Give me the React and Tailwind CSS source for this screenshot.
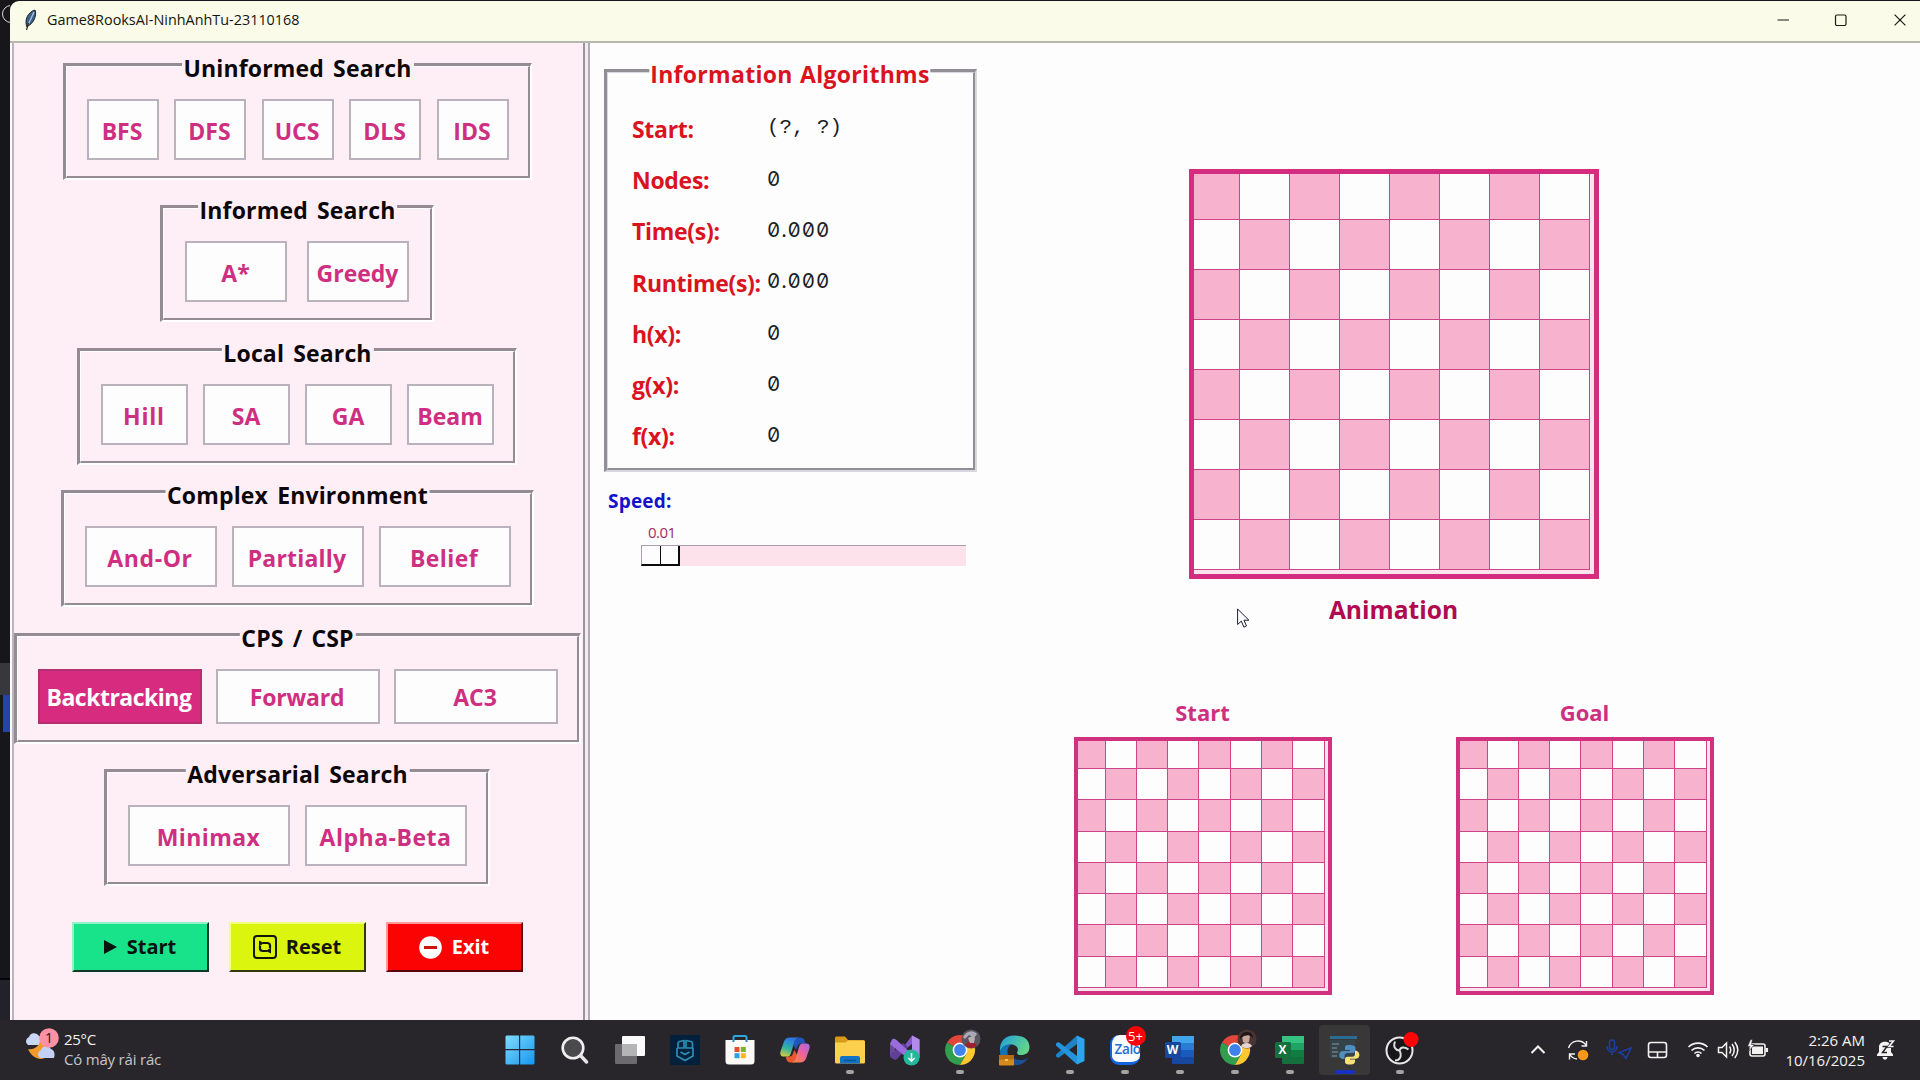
import React from 'react';

const PINK = 'text-[#cf2f80]';

const TRACKING = {
  'Alpha-Beta': 'tracking-[0.5px]',
  'And-Or': 'tracking-[0.6px]',
  Minimax: 'tracking-[0.4px]',
  Hill: 'tracking-[0.8px]',
  Belief: 'tracking-[0.4px]',
  Partially: 'tracking-[0.2px]',
  Backtracking: 'tracking-[-0.5px]',
  Forward: 'tracking-[-0.2px]',
};

function Group({ title, items, frame, button, selected, inset = 'pr-[19px] pl-[20px]' }) {
  return (
    <section className={`relative shrink-0 border-t-[3px] border-r-2 border-b-2 border-l-[3px] border-t-[#948c92] border-l-[#948c92] border-r-white border-b-white ${frame}`}>
      <div className={`flex h-full items-end justify-between border-t border-r-2 border-b-2 border-l border-t-white border-l-white border-r-[#948c92] border-b-[#948c92] pb-[16px] ${inset}`}>
        {items.map((t) => (
          <button
            key={t}
            className={`flex items-center justify-center border-2 pr-[1px] text-[23px] leading-none font-bold whitespace-nowrap ${TRACKING[t] || ''} ${button} ${
              t === selected ? 'border-[#b5306f] bg-[#d62b7f] text-white' : `border-[#b9b1bb] bg-[#fdfdfe] ${PINK}`
            }`}
          >
            {t}
          </button>
        ))}
      </div>
      <h2 className="absolute -top-[13px] left-1/2 -translate-x-1/2 bg-[#feeef5] px-[2px] text-[23px] leading-[30px] font-bold tracking-[0.150px] whitespace-nowrap text-[#0c070a] [word-spacing:3px]">
        {title}
      </h2>
    </section>
  );
}

function Board({ large }) {
  const cells = [];
  for (let r = 0; r < 8; r++) {
    for (let c = 0; c < 8; c++) {
      cells.push(
        <div key={`${r}-${c}`} className={`border-r border-b border-[#cf4488] ${(r + c) % 2 === 0 ? 'bg-[#f7b3cd]' : 'bg-[#fdfdfe]'}`} />
      );
    }
  }
  return large ? (
    <div className="h-[410px] w-[410px] border-[5px] border-[#d42c7e] bg-[#fce4ee]">
      <div className="grid h-[396px] w-[396px] grid-cols-[46px_repeat(7,50px)] grid-rows-[46px_repeat(7,50px)]">{cells}</div>
    </div>
  ) : (
    <div className="h-[258px] w-[258px] border-4 border-[#d0327f] bg-[#fce4ee]">
      <div className="grid h-[247px] w-[247px] grid-cols-[28px_repeat(7,1fr)] grid-rows-[28px_repeat(7,1fr)]">{cells}</div>
    </div>
  );
}

const MONO = "font-['Liberation_Mono',monospace] text-[20.800px]";
const ZERO = "font-['Inter',monospace] text-[20.500px] tracking-[0.900px] [font-feature-settings:'tnum','zero']";

const info = [
  ['Start:', '(?, ?)', MONO],
  ['Nodes:', '0', ZERO],
  ['Time(s):', '0.000', ZERO],
  ['Runtime(s):', '0.000', ZERO],
  ['h(x):', '0', ZERO],
  ['g(x):', '0', ZERO],
  ['f(x):', '0', ZERO],
];

function Feather() {
  return (
    <svg width="14" height="22" viewBox="0 0 14 22">
      <path d="M3 18C0 11 4 3 11 1c2 5-1 13-7 16z" fill="#3c5f86" stroke="#17202c" strokeWidth="1" />
      <path d="M10 3 4 16" stroke="#a9c6dd" strokeWidth="1.3" />
      <path d="M4.500 14 2.500 21" stroke="#2a2018" strokeWidth="1.200" />
    </svg>
  );
}

function Chrome({ avatar }) {
  return (
    <svg width="38" height="38" viewBox="0 0 38 38" className="overflow-visible">
      <g transform="translate(4 4)">
        <path d="M15 15 2.010 7.500A15 15 0 0 1 28 7.500L15 7.500Z" fill="#e2453a" />
        <path d="M2.010 7.500A15 15 0 0 0 15 30L21.500 18.700 15 15Z" fill="#2f9f4f" />
        <path d="M28 7.500A15 15 0 0 1 15 30L21.500 18.700 20 7.500Z" fill="#fcc82f" />
        <circle cx="15" cy="15" r="7.400" fill="#fff" />
        <circle cx="15" cy="15" r="5.900" fill="#3f82ee" />
      </g>
      {avatar === 'grey' ? (
        <g>
          <circle cx="30" cy="8" r="9.500" fill="#59565f" />
          <path d="M22 6c3-6 10-8 14-3l-3 4-5-3-4 4z" fill="#a9aab8" />
          <path d="M24 14c4 4 9 4 12 0l-4-3h-5z" fill="#9f1f2c" />
          <path d="M27 7q4-3 7 0l-1 5h-4z" fill="#b9aeb4" />
        </g>
      ) : (
        <g>
          <circle cx="31" cy="8" r="9.500" fill="#4b3533" />
          <path d="M26 5q4-3 8 0l-1 6q-3 2-6 0z" fill="#c9a79c" />
          <path d="M25 15c2-4 9-4 11 0-3 3-8 3-11 0z" fill="#e3d5cf" />
          <path d="M24 8c0-9 13-9 13-1l-4-3-5 1z" fill="#221618" />
        </g>
      )}
    </svg>
  );
}

function Office({ letter, a, b, c, d }) {
  return (
    <div className="relative h-[30px] w-[30px]">
      <svg width="30" height="30" viewBox="0 0 30 30">
        <path d="M7 1h22v7.500H7z" fill={a} />
        <path d="M7 8h22v7.500H7z" fill={b} />
        <path d="M7 15h22v7.500H7z" fill={c} />
        <path d="M7 22h22v6q0 1-1 1H8q-1 0-1-1z" fill={d} />
        <rect x="0" y="7" width="16" height="16" rx="1.500" fill={d} />
      </svg>
      <span className="absolute top-[7px] left-0 w-4 text-center text-[12px] leading-4 font-bold text-white">{letter}</span>
    </div>
  );
}

const I = {
  windows: (
    <svg width="30" height="30" viewBox="0 0 30 30">
      <defs>
        <linearGradient id="win" x1="0" y1="0" x2="1" y2="1">
          <stop offset="0" stopColor="#7fdcff" />
          <stop offset="1" stopColor="#1496f0" />
        </linearGradient>
      </defs>
      <path d="M1.500 0.500H14V14H0.500V1.500zM15.200 .5h13.300l1 1V14H15.200zM.5 15.200H14v14.300H1.500l-1-1zM15.200 15.200h14.300v13.300l-1 1H15.200z" fill="url(#win)" />
    </svg>
  ),
  search: (
    <svg width="28" height="28" viewBox="0 0 28 28" fill="none">
      <circle cx="12" cy="12" r="10.300" fill="#4a494c" stroke="#f0f0f0" strokeWidth="2.600" />
      <path d="m19.500 19.500 6 6.500" stroke="#e6e6e6" strokeWidth="3.400" strokeLinecap="round" />
    </svg>
  ),
  taskview: (
    <svg width="30" height="28" viewBox="0 0 30 28">
      <rect x="7" y="0" width="23" height="20" rx="1" fill="#fafafa" />
      <rect x="0" y="8" width="22" height="20" rx="1" fill="#77777a" fillOpacity=".85" />
      <path d="M7 8h15v12H7z" fill="#b4b4b6" />
    </svg>
  ),
  shield: (
    <svg width="30" height="30" viewBox="0 0 30 30" fill="none" stroke="#2f8db4" strokeWidth="1.700" strokeLinejoin="round">
      <rect width="30" height="30" fill="#03203c" stroke="none" />
      <path d="M14 5.500v7.500H8V8.500q0-1.500 1.500-2zM16 5.500l5 1q1.500.5 1.500 2V13H16zM7 13v8l8 4.500 8-4.500v-8M10.500 17 15 19.500l4.500-2.500" />
    </svg>
  ),
  store: (
    <svg width="30" height="30" viewBox="0 0 30 30">
      <path d="M8.500 7V2.500Q8.500 1 10 1h10q1.500 0 1.500 1.500V7" fill="none" stroke="#2aa7de" strokeWidth="2" />
      <path d="M.5 5.500Q.5 5 1 5h28q.5 0 .5.500V26q0 3.500-3.500 3.500H4Q.5 29.500.5 26z" fill="#fbfaf6" />
      <path d="M8.500 7V5M21.500 7V5" stroke="#2a86b8" strokeWidth="2" />
      <path d="M9.500 12h5v5h-5z" fill="#e8502c" />
      <path d="M15.800 12h5v5h-5z" fill="#7db51c" />
      <path d="M9.500 18.200h5v5h-5z" fill="#25a3e2" />
      <path d="M15.800 18.200h5v5h-5z" fill="#fbb71c" />
    </svg>
  ),
  copilot: (
    <svg width="30" height="28" viewBox="0 0 30 28">
      <defs>
        <linearGradient id="cp1" x1=".3" y1="0" x2="0" y2="1">
          <stop offset="0" stopColor="#2f78e0" />
          <stop offset=".5" stopColor="#2fb3a5" />
          <stop offset="1" stopColor="#f1d02e" />
        </linearGradient>
        <linearGradient id="cp2" x1="1" y1="0" x2=".2" y2="1">
          <stop offset="0" stopColor="#a565e8" />
          <stop offset=".55" stopColor="#ef6399" />
          <stop offset="1" stopColor="#f6854a" />
        </linearGradient>
      </defs>
      <path d="M16 1.500h4.500q3 0 4 3l1 3h-4.500q-2.500 0-3.300 2.500L16 14l-4-8z" fill="#1f55b8" />
      <path d="M14 26.500H10q-2.500 0-3.500-3L5.500 20.500h4q2.500 0 3.300-2.500l1.500-4 4 7z" fill="#e8572f" />
      <path d="M10 1.500h8q-2.500.5-3.500 3.500L11 17q-1 3.500-3.500 3.500H4q-4.500 0-3.500-5L4 5.500q1.500-4 6-4z" fill="url(#cp1)" />
      <path d="M20 26.500h-8q2.500-.5 3.500-3.500L19 11q1-3.500 3.500-3.500H26q4.500 0 3.500 5L26 22.500q-1.500 4-6 4z" fill="url(#cp2)" />
    </svg>
  ),
  folder: (
    <svg width="30" height="28" viewBox="0 0 30 28">
      <path d="M0 2Q0 .5 1.500.5H10l3 3.500h15.500Q30 4 30 5.500V10H0z" fill="#d99a1a" />
      <path d="M0 6.500h10.500l2.500-2H28.500Q30 4.500 30 6v20q0 1.500-1.500 1.500h-27Q0 27.500 0 26z" fill="#fccf4c" />
      <path d="M5 27.500V22q0-2 2-2h16q2 0 2 2v5.500z" fill="#1473c4" />
      <path d="M9 24.500h12" stroke="#0c5596" strokeWidth="1.600" />
    </svg>
  ),
  vs: (
    <svg width="31" height="31" viewBox="0 0 31 31">
      <path d="M1 9 5 4.500l1 5.500v10l1 5-6-4z" fill="#6b4a9e" />
      <path d="M16 10 23 .5l7.500 4v18L23 27z" fill="#8657cc" />
      <path d="M23 .5l7.500 4v18L23 27z" fill="#b28aec" />
      <path d="M23 9v12l-7.500-6z" fill="#28262b" />
      <path d="m2 19 12-11 5 4L8 24q-2 1.500-4 0l-3-2z" fill="#5f3f98" />
      <path d="M3 4.500q2-1.500 4.500.5L23 19v8L1 9z" fill="#9a6ddc" />
      <circle cx="22.500" cy="22.500" r="8" fill="#26b79a" />
      <path d="M22.500 18v8m-3.200-3 3.200 3.200 3.200-3.200" stroke="#e9fff8" strokeWidth="1.600" fill="none" />
    </svg>
  ),
  edge: (
    <svg width="31" height="31" viewBox="0 0 31 31">
      <defs>
        <linearGradient id="edg" x1="0" y1="0" x2="1" y2=".5">
          <stop offset="0" stopColor="#1f9fe0" />
          <stop offset="1" stopColor="#62d489" />
        </linearGradient>
      </defs>
      <path d="M1 17Q0 1 15.500.5 30 1 30.500 12c0 6-4 8-8.500 8-3.500 0-4.500-2-3.500-3.500C20 13 17 9.500 12 9.500 6 9.500 2 13 1 17z" fill="url(#edg)" />
      <path d="M1 17c1-5 5-7.500 11-7.500C8 12 7 19 11 24l5 6C7 31 1 25 1 17z" fill="#1273b8" />
      <path d="M12 21c5 5 12 5 17 2-3 5-8 8-14 7z" fill="#1b4f94" />
      <rect x="0" y="20" width="15" height="10.500" rx="1" fill="#d58a1e" />
      <path d="M0 20h15v4.500H0z" fill="#b96d12" />
      <path d="M6 24h3v2H6z" fill="#f4c66a" />
    </svg>
  ),
  vscode: (
    <svg width="30" height="30" viewBox="0 0 30 30">
      <path d="M1 19.500 22 .5V9L3.500 23 1 21.500z" fill="#1c83c8" />
      <path d="M1 10.500v-2L3.500 7 22 21v8.500z" fill="#2495dd" />
      <path d="M22 .5 29.500 4v22L22 29.500z" fill="#2ba6ee" />
    </svg>
  ),
  zalo: (
    <div className="relative h-[30px] w-[30px] rounded-[9px] border-b-[3px] border-l-2 border-[#1263e0] bg-[#fafcff]">
      <span className="absolute top-[5px] left-[3px] text-[13.500px] leading-[18px] font-semibold tracking-tight text-[#1d6fd2]">Zalo</span>
      <span className="absolute -top-[9px] left-[14px] flex h-5 w-5 items-center justify-center rounded-full bg-[#fb0408] text-[13px] leading-none text-white">5+</span>
    </div>
  ),
  python: (
    <svg width="30" height="30" viewBox="0 0 30 30">
      <path d="M0 1h27v3H0z" fill="#2a6c94" />
      <path d="M0 5h25v18H0z" fill="#35434b" />
      <path d="M2 9h7M2 13h5M2 17h6M2 21h5" stroke="#6d7d84" strokeWidth="1.500" />
      <path d="M19 10c-4 0-4 1.500-4 3v2h5v1h-7c-5 0-5 8 0 8h1.500v-3c0-2 1.500-3 3-3H23c1.500 0 2.500-1 2.500-2.500V13c0-2-2-3-6.500-3z" fill="#4f8fc0" />
      <path d="M20 29.500c4 0 5-1.500 5-3v-2h-5v-.8h6c5 0 4-8 0-8h-1v3c0 2-1 3-2.500 3H17.500c-1.500 0-2.500 1-2.500 2.500v3c0 1.800 2 2.300 5 2.300z" fill="#f7e27a" />
    </svg>
  ),
  obs: (
    <svg width="36" height="30" viewBox="0 0 36 30" className="overflow-visible">
      <circle cx="17.500" cy="15.500" r="13" fill="#17171a" stroke="#e8e8e8" strokeWidth="2" />
      <path d="M13 6.500c-2 5 0 8.500 4.500 9M26.500 14.500c-4-3-8-2.500-9 1M13 25.500c4.500 0 7.500-4 4.500-10" stroke="#dcdcdc" strokeWidth="2" fill="none" />
      <circle cx="29" cy="4.500" r="7.500" fill="#fb0508" />
    </svg>
  ),
};

const apps = [
  [I.windows],
  [I.search],
  [I.taskview],
  [I.shield],
  [I.store],
  [I.copilot],
  [I.folder, 1],
  [I.vs],
  [<Chrome avatar="grey" />, 1],
  [I.edge],
  [I.vscode, 1],
  [I.zalo, 1],
  [<Office letter="W" a="#41a5ee" b="#2b7cd3" c="#185abd" d="#1648a0" />, 1],
  [<Chrome avatar="brown" />, 1],
  [<Office letter="X" a="#33c481" b="#21a366" c="#107c41" d="#14703c" />, 1],
  [I.python, 2],
  [I.obs, 1],
];

function Taskbar() {
  return (
    <footer className="flex h-[60px] shrink-0 bg-[#28262b] text-[15px] leading-5 text-[#f4f2ee]">
      <div className="flex w-[492px] items-start pt-[9px] pl-[24px]">
        <svg width="36" height="36" viewBox="0 0 36 36" className="-mt-px">
          <path d="M4 17a4.500 4.500 0 0 1 1-8 5.500 5.500 0 0 1 10-1q5 2 3 9z" fill="#c9d7f7" />
          <path d="M4 21c5 1 11-2 12-8 7 1 12 6 10 12-4 8-16 9-22-4z" fill="#f29a2c" />
          <path d="M16 30a4.500 4.500 0 0 1 1-8 5.500 5.500 0 0 1 10-1q5 2 3 9z" fill="#c2d2f6" />
          <circle cx="25" cy="10" r="9.800" fill="#fb91a3" />
          <text x="25" y="15" textAnchor="middle" fontSize="14" fill="#1e1418">1</text>
        </svg>
        <div className="ml-[4px]">
          <div className="tracking-[-0.3px]">25°C</div>
          <div className="tracking-[-0.2px] text-[#c9c6c6]">Có mây rải rác</div>
        </div>
      </div>
      <div className="flex">
        {apps.map(([icon, state], i) => (
          <div key={i} className="flex h-[60px] w-[55px] flex-col items-center">
            <div className={`mt-[5px] flex h-[50px] w-[51px] flex-col items-center rounded ${state === 2 ? 'bg-[#393838]' : ''}`}>
              <div className="mt-[4px] mb-px flex h-[40px] items-center justify-center pt-[2px]">{icon}</div>
              {state === 1 && <div className="h-1 w-2 rounded-full bg-[#a3a3a3]" />}
              {state === 2 && <div className="h-1 w-5 rounded-full bg-[#1a30c0]" />}
            </div>
          </div>
        ))}
      </div>
      <div className="ml-[88px] flex flex-1 items-center">
        <svg width="261" height="36" viewBox="1515 1032 261 36" className="shrink-0" fill="none" stroke="#f2f2f0" strokeWidth="1.600">
          <path d="m1531.500 1053 6.500-6.500 6.500 6.500" strokeWidth="2" />
          <path d="M1568.500 1048a10 10 0 0 1 17.500-3m.5-4v5h-5M1577 1059a10 10 0 0 1-7.500-5m0 5.500v-5.500h5.500" strokeWidth="1.400" />
          <circle cx="1583" cy="1055" r="5.300" fill="#fb961d" stroke="none" />
          <rect x="1609.500" y="1040" width="5" height="9.500" rx="2.500" stroke="#1c3f9f" />
          <path d="M1607 1046c0 8 10 8 10 0M1612 1052v3" stroke="#1c3f9f" />
          <path d="m1631 1048-12 4.500 4 2 3 4z" stroke="#1c3f9f" />
          <rect x="1648.500" y="1042.500" width="18" height="15" rx="2.500" />
          <path d="M1648.500 1052h18M1657.500 1052v5.500" />
          <path d="M1688.500 1047a13.500 13.500 0 0 1 19 0M1691.500 1050.500a9.300 9.300 0 0 1 13 0M1694.500 1053.500a5 5 0 0 1 7 0" strokeWidth="1.700" />
          <circle cx="1698" cy="1055.500" r="1.800" fill="#f2f2f0" stroke="none" />
          <path d="M1718.500 1047.500h3.500l4.500-4.500v14l-4.500-4.500h-3.500zM1729.500 1046.500q2.500 3.500 0 7M1732 1044q4.500 6 0 12M1734.800 1042q6 8 0 16" strokeWidth="1.500" />
          <rect x="1750" y="1044" width="15" height="12" rx="2" />
          <path d="M1752 1046.500h11v7.500h-11z" fill="#f2f2f0" stroke="none" />
          <path d="M1766.800 1048v4" strokeWidth="2.500" />
          <path d="m1750.500 1039.500-3 7h2.500l-1.500 5 6-7h-3l1-5z" fill="#f2f2f0" stroke="#28262b" strokeWidth=".6" />
        </svg>
        <div className="w-[89px] text-right">
          <div>2:26 AM</div>
          <div>10/16/2025</div>
        </div>
        <svg width="20" height="22" viewBox="0 0 20 22" className="ml-[11px]">
          <path d="M1 17v-1.500l2-2.500V8c0-7 12-7 12 0v5l2 2.500V17zM6.500 18h5c-.5 3.500-4.500 3.500-5 0z" fill="#f4f4f2" />
          <path d="M6.500 7.500H11l-4.500 6H11" stroke="#28262b" strokeWidth="1.500" fill="none" />
          <path d="M13 2h4.500L13 7.500h4.500" stroke="#28262b" strokeWidth="3" fill="none" />
          <path d="M13 2h4.500L13 7.500h4.500" stroke="#f4f4f2" strokeWidth="1.600" fill="none" />
        </svg>
      </div>
    </footer>
  );
}

export default function App() {
  const action = 'flex h-[50px] w-[137px] items-center justify-center border-2 text-[20px] leading-none font-bold';
  return (
    <div className="relative flex h-[1080px] w-[1920px] flex-col overflow-hidden bg-[#17161a] font-['Open_Sans','Noto_Sans',sans-serif]">
      <div className="flex h-[1020px]">
        <aside className="flex w-[10px] shrink-0 flex-col overflow-hidden">
          <div className="mt-[5px] ml-[2px] h-[18px] w-[18px] shrink-0 rounded-full border border-[#d8d8d8]" />
          <div className="mt-[640px] h-[32px] shrink-0 bg-[#38373b]" />
          <div className="ml-[3px] h-[37px] shrink-0 bg-[#2544a8]" />
          <div className="mt-[246px] h-[2px] shrink-0 bg-[#050507]" />
          <div className="flex-1 bg-[#232129]" />
        </aside>
        <div className="mt-px flex w-[1910px] flex-col overflow-hidden rounded-tl-[9px] bg-[#fbfbea]">
          <header className="flex h-[42px] shrink-0 items-center border-b-2 border-[#b8b6b0] pb-[2px] pl-[14px]">
            <Feather />
            <h1 className="ml-[9px] text-[14.400px] leading-none text-[#15150f]">Game8RooksAI-NinhAnhTu-23110168</h1>
            <svg width="140" height="12" viewBox="0 0 140 12" className="mr-[12px] ml-auto" fill="none" stroke="#1b1b16" strokeWidth="1.200">
              <path d="M17.500 6h11.500" />
              <rect x="75.500" y="1" width="10.500" height="10.500" rx="1.500" />
            </svg>
            <svg width="12" height="12" viewBox="0 0 12 12" className="mr-[14px] -ml-[18px]" fill="none" stroke="#1b1b16" strokeWidth="1.200">
              <path d="m.6.600 10.800 10.800M11.400.6.600 11.400" />
            </svg>
          </header>
          <div className="flex min-h-0 flex-1 bg-[#fdfafb] pl-[2px]">
            <nav className="flex w-[571px] shrink-0 flex-col items-center gap-[25.400px] border-l-2 border-[#bdb5bd] bg-[#feeef5] pt-[20px] pr-[3px]">
              <Group title="Uninformed Search" items={['BFS', 'DFS', 'UCS', 'DLS', 'IDS']} frame="h-[117px] w-[469px]" button="h-[61px] w-[72px] pt-[3px]" />
              <Group title="Informed Search" items={['A*', 'Greedy']} frame="h-[117px] w-[274px]" button="h-[61px] w-[102px] pt-[4px]" inset="pr-[21px] pl-[21px]" />
              <Group title="Local Search" items={['Hill', 'SA', 'GA', 'Beam']} frame="h-[117px] w-[440px]" button="h-[61px] w-[87px] pt-[4px]" />
              <Group title="Complex Environment" items={['And-Or', 'Partially', 'Belief']} frame="h-[117px] w-[473px]" button="h-[61px] w-[132px] pt-[4px]" />
              <Group title="CPS / CSP" items={['Backtracking', 'Forward', 'AC3']} selected="Backtracking" frame="h-[111px] w-[567px]" button="h-[55px] w-[164px] pt-[2px]" />
              <Group title="Adversarial Search" items={['Minimax', 'Alpha-Beta']} frame="h-[117px] w-[386px]" button="h-[61px] w-[162px] pt-[4px]" />
              <div className="mt-[11px] flex gap-[20px]">
                <button className={`${action} border-t-[#8ff3c6] border-r-[#0d3a26] border-b-[#0d3a26] border-l-[#8ff3c6] bg-[#18e28a] text-[#08130d]`}>
                  <svg width="13" height="14" viewBox="0 0 13 14" className="mr-[10px]">
                    <path d="M0 0v14l13-7z" fill="#08130d" />
                  </svg>
                  Start
                </button>
                <button className={`${action} border-t-[#f2ff7c] border-r-[#33380a] border-b-[#33380a] border-l-[#f2ff7c] bg-[#dbf50f] text-[#14160a]`}>
                  <svg width="24" height="24" viewBox="0 0 24 24" className="mr-[9px]" fill="none" stroke="#14160a" strokeWidth="2">
                    <rect x="1" y="1" width="22" height="22" rx="3" />
                    <path d="M10 8h4q3 0 3 2.500V13M14 16h-4q-3 0-3-2.500V11" strokeWidth="2.200" />
                    <path d="M6 5.500v6L11 8zM18 18.500v-6L13 16z" fill="#14160a" stroke="none" />
                  </svg>
                  Reset
                </button>
                <button className={`${action} border-t-[#ff9b94] border-r-[#5c0505] border-b-[#5c0505] border-l-[#ff9b94] bg-[#fb0303] text-white`}>
                  <svg width="23" height="23" viewBox="0 0 23 23" className="mr-[10px]">
                    <circle cx="11.500" cy="11.500" r="11.300" fill="#fff" />
                    <path d="M5 10h13v3H5z" fill="#c8160f" />
                  </svg>
                  Exit
                </button>
              </div>
            </nav>
            <div className="w-[7px] shrink-0 border-x-2 border-r-[#b3abb3] border-l-[#9c949c] bg-[#f3ecf0]" />
            <main className="flex flex-1 bg-[#fdfdfe]">
              <div className="w-[465px] pt-[26px] pl-[14px]">
                <section className="relative h-[403px] w-[373px] border-t-[3px] border-r-2 border-b-2 border-l-[3px] border-t-[#918e95] border-r-[#d8d6de] border-b-[#d8d6de] border-l-[#918e95]">
                  <div className="flex h-full flex-col border-t border-r-2 border-b-2 border-l border-t-[#d8d6de] border-r-[#918e95] border-b-[#918e95] border-l-[#d8d6de] pt-[31px] pl-[24px]">
                    {info.map(([k, v, font]) => (
                      <div key={k} className="flex h-[51.200px] shrink-0 items-center">
                        <span className="w-[135px] text-[23px] leading-none font-bold tracking-[-0.300px] whitespace-nowrap text-[#da1320]">{k}</span>
                        <span className={`-mt-[3px] leading-none whitespace-pre text-[#1c1c1f] ${font}`}>{v}</span>
                      </div>
                    ))}
                  </div>
                  <h2 className="absolute -top-[13px] left-1/2 -ml-[1px] -translate-x-1/2 bg-[#fdfdfe] px-[1px] text-[23px] leading-[30px] font-bold tracking-[0.300px] whitespace-nowrap text-[#da1320] [word-spacing:1px]">
                    Information Algorithms
                  </h2>
                </section>
                <div className="mt-[16px] ml-[4px] text-[19px] leading-[26px] font-bold tracking-[0.200px] text-[#1512cc]">Speed:</div>
                <div className="mt-[8px] ml-[44px] text-[15px] leading-[20px] tracking-[-0.500px] text-[#9b2f66]">0.01</div>
                <div className="mt-[3px] ml-[37px] h-[21px] w-[325px] border-t border-[#a79fa8] bg-[#fde2ec]">
                  <div className="flex h-[20px] w-[39px] border-r-2 border-b-2 border-l border-[#0b0b0b] border-l-[#a79fa8] bg-[#fdfdfe]">
                    <div className="w-[19px] border-r border-[#0b0b0b]" />
                  </div>
                </div>
              </div>
              <div className="flex w-[677px] flex-col items-center pt-[126px]">
                <Board large />
                <h2 className="mt-[12px] text-[24.600px] leading-[38px] font-bold text-[#b00a50]">Animation</h2>
                <div className="mt-[66px] flex w-[640px] justify-between">
                  {['Start', 'Goal'].map((t) => (
                    <div key={t} className="flex flex-col items-center">
                      <h3 className="mb-[8px] text-[22px] leading-[34px] font-bold text-[#cf2f80]">{t}</h3>
                      <Board />
                    </div>
                  ))}
                </div>
              </div>
            </main>
          </div>
        </div>
      </div>
      <Taskbar />
      <svg width="13" height="20" viewBox="0 0 13 20" className="absolute top-[608px] left-[1237px]">
        <path d="M.6 1v15.500l3.700-3.400 2.600 6 2.600-1.200-2.600-5.700h5z" fill="#fff" stroke="#1b1b30" strokeWidth="1" />
      </svg>
    </div>
  );
}
